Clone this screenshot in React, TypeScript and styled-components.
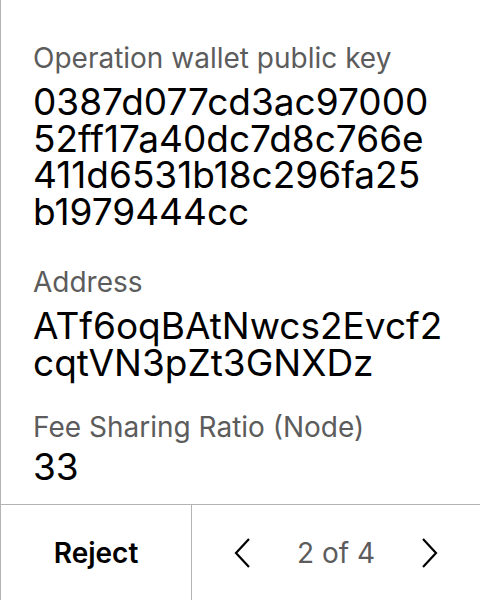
import React from "react";
import styled, { createGlobalStyle } from "styled-components";

const Global = createGlobalStyle`
  html, body { margin: 0; padding: 0; background: #fff; }
  body { font-family: Inter, "Noto Sans", sans-serif; }
`;

const Screen = styled.div`
  width: 480px;
  height: 600px;
  box-sizing: border-box;
  border-left: 1px solid #b3b3b3;
  display: flex;
  flex-direction: column;
  overflow: hidden;
`;

const Content = styled.div`
  flex: 1;
  padding: 41px 0 0 32px;
  display: flex;
  flex-direction: column;
`;

const Field = styled.div<{ $before: number; $gap: number }>`
  display: flex;
  flex-direction: column;
  padding-top: ${(p) => p.$before}px;
  gap: ${(p) => p.$gap}px;
`;

const Label = styled.div`
  font-size: 28px;
  line-height: 34px;
  color: #5c5c5c;
  white-space: nowrap;
`;

const Value = styled.div`
  font-size: 37px;
  line-height: 36.7px;
  color: #000;
  white-space: nowrap;
`;

const Footer = styled.div`
  height: 96px;
  border-top: 1px solid #b3b3b3;
  display: grid;
  grid-template-columns: 191px 1fr;
  box-sizing: border-box;
`;

const RejectButton = styled.button`
  border: none;
  border-right: 1px solid #b3b3b3;
  background: none;
  font-family: inherit;
  font-size: 28px;
  font-weight: 600;
  color: #000;
  padding: 0;
`;

const Pager = styled.div`
  display: flex;
  align-items: center;
  justify-content: space-between;
  padding: 0 42px 0 42px;
`;

const Arrow = styled.button`
  border: none;
  background: none;
  padding: 0;
  width: 16px;
  height: 32px;
  display: flex;
  align-items: center;
  justify-content: center;
`;

const PageText = styled.span`
  font-size: 28px;
  color: #5c5c5c;
`;

const Chevron = ({ dir }: { dir: "left" | "right" }) => (
  <svg width="16" height="30" viewBox="0 0 16 30" fill="none">
    <path
      d={dir === "left" ? "M15 1 L2 15 L15 29" : "M1 1 L14 15 L1 29"}
      stroke="#000"
      strokeWidth="2.2"
    />
  </svg>
);

const fields = [
  { label: "Operation wallet public key", before: 0, gap: 9, lines: ["0387d077cd3ac97000", "52ff17a40dc7d8c766e", "411d6531b18c296fa25", "b1979444cc"] },
  { label: "Address", before: 34, gap: 9, lines: ["ATf6oqBAtNwcs2Evcf2", "cqtVN3pZt3GNXDz"] },
  { label: "Fee Sharing Ratio (Node)", before: 29, gap: 5, lines: ["33"] },
];

export default function App() {
  return (
    <>
      <Global />
      <Screen>
        <Content>
          {fields.map((f) => (
            <Field key={f.label} $before={f.before} $gap={f.gap}>
              <Label>{f.label}</Label>
              <Value>
                {f.lines.map((l, i) => (
                  <div key={i}>{l}</div>
                ))}
              </Value>
            </Field>
          ))}
        </Content>
        <Footer>
          <RejectButton>Reject</RejectButton>
          <Pager>
            <Arrow><Chevron dir="left" /></Arrow>
            <PageText>2 of 4</PageText>
            <Arrow><Chevron dir="right" /></Arrow>
          </Pager>
        </Footer>
      </Screen>
    </>
  );
}
